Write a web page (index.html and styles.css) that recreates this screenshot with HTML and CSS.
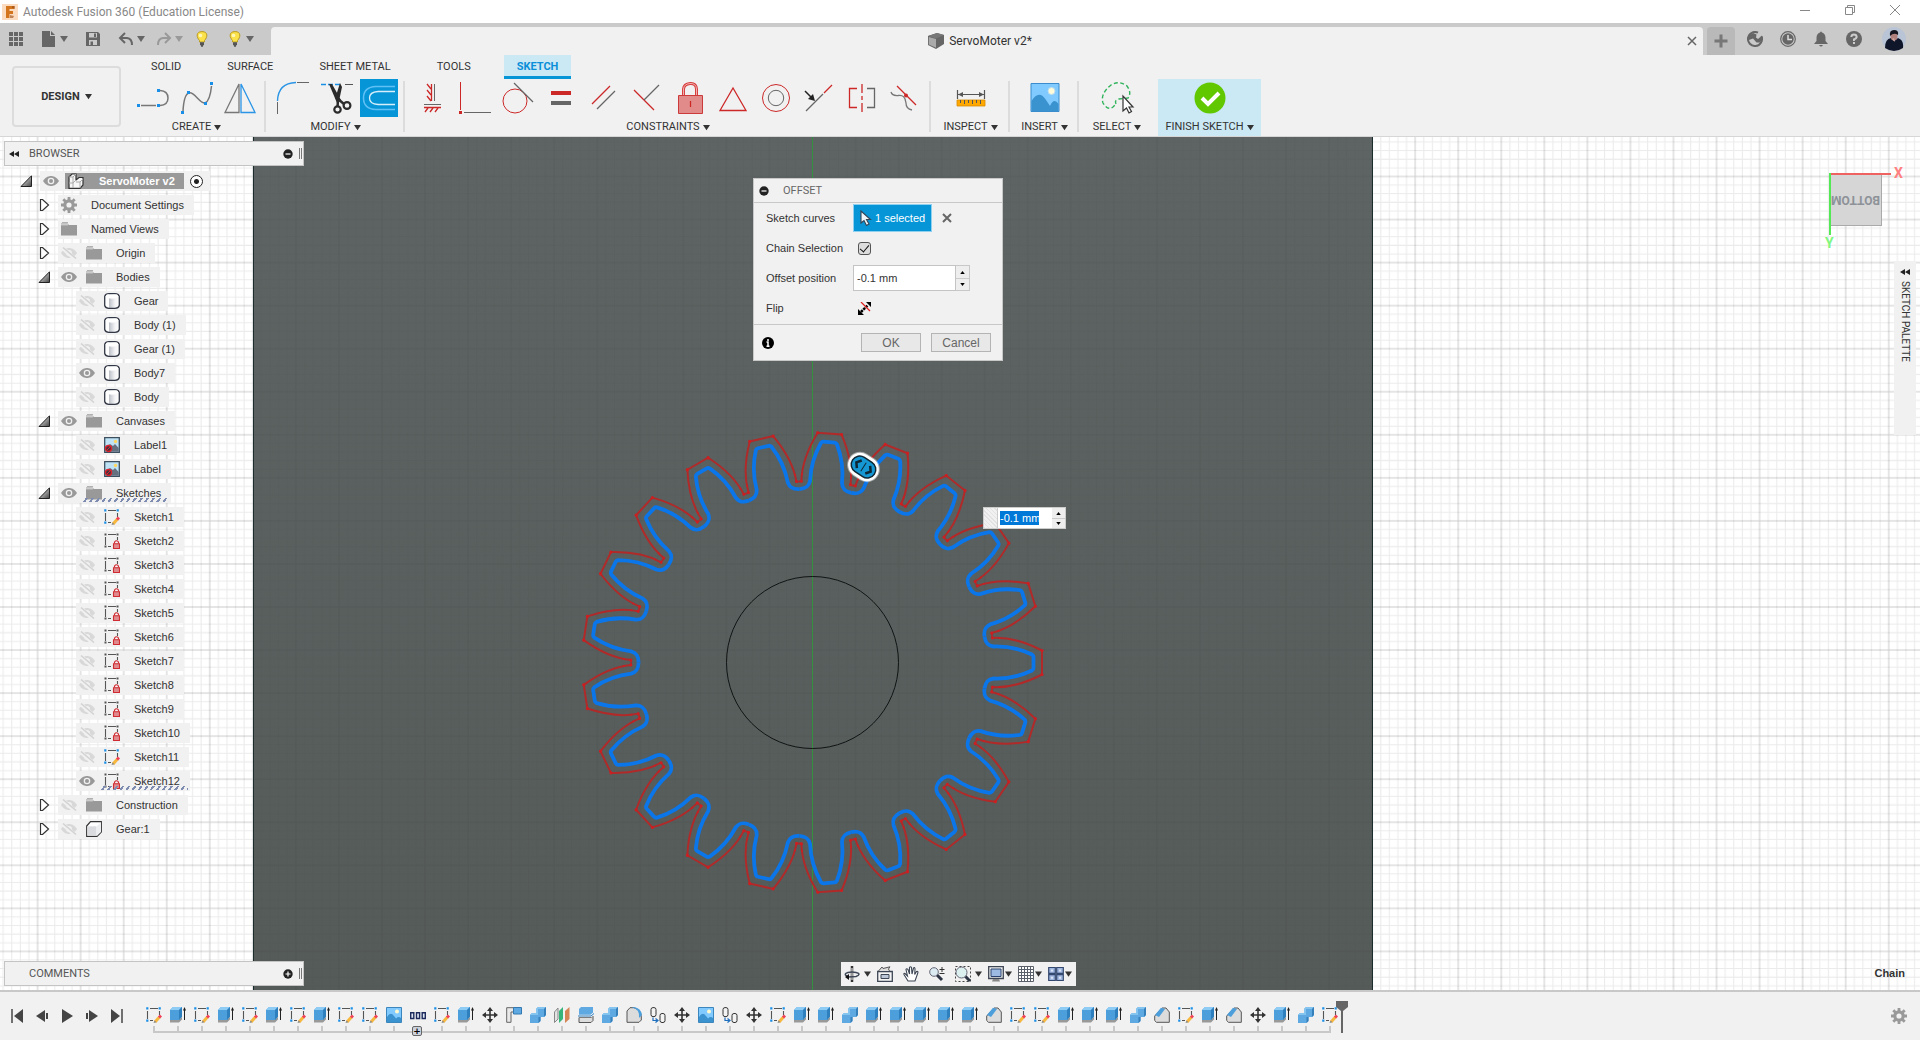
FILE: index.html
```html
<!DOCTYPE html>
<html lang="en">
<head>
<meta charset="utf-8">
<title>Autodesk Fusion 360 (Education License)</title>
<link rel="stylesheet" href="styles.css">
</head>
<body>
<svg class="defs" aria-hidden="true">
  <defs>
    <linearGradient id="g-arrow" x1="0" y1="0" x2="1" y2="1"><stop offset="0" stop-color="#fff"/><stop offset="1" stop-color="#444"/></linearGradient>
    <linearGradient id="g-body" x1="0" x2="1" y1="0" y2="0"><stop offset="0" stop-color="#fff"/><stop offset=".3" stop-color="#fff"/><stop offset=".32" stop-color="#bfc3c9"/><stop offset=".7" stop-color="#f4f4f6"/><stop offset="1" stop-color="#fff"/></linearGradient>
  </defs>
  <symbol id="i-open" viewBox="0 0 12 12"><path d="M1 11.500L11.500 11.500V.8z" fill="url(#g-arrow)" stroke="#222"/></symbol>
  <symbol id="i-closed" viewBox="0 0 12 12"><path d="M2.500 .5H4.500L10.500 6L4.500 11.500H2.500z" fill="#fff" stroke="#333" stroke-width="1.200"/></symbol>
  <symbol id="i-eye" viewBox="0 0 16 16"><path d="M0 8C3 3.500 6 3 8 3s5 .5 8 5c-3 4.500-6 5-8 5s-5-.5-8-5z" fill="#999"/><circle cx="8" cy="8" r="3.300" fill="#f1f1f1"/><circle cx="8" cy="8" r="2" fill="#999"/></symbol>
  <symbol id="i-hid" viewBox="0 0 16 16"><path d="M0 8C3 3.500 6 3 8 3s5 .5 8 5c-3 4.500-6 5-8 5s-5-.5-8-5z" fill="#d8d8d8"/><circle cx="8" cy="8" r="3" fill="#f1f1f1"/><path d="M1 2.500L14 14" stroke="#f1f1f1" stroke-width="4"/><path d="M2 2.500L15 13.500" stroke="#d2d2d2" stroke-width="1.600"/></symbol>
  <symbol id="i-folder" viewBox="0 0 16 16"><path d="M0 2.500h6.500l1.500 1.500h8V14.500H0z" fill="#999"/><path d="M0 3.800h7" stroke="#f1f1f1" stroke-width=".8"/><path d="M1 1.600h6" stroke="#aaa"/></symbol>
  <symbol id="i-gear" viewBox="0 0 16 16"><circle cx="8" cy="8" r="4.200" fill="none" stroke="#999" stroke-width="3.200"/><path d="M8 0V3M8 13V16M0 8H3M13 8H16M2.300 2.300L4.500 4.500M11.500 11.500L13.700 13.700M13.700 2.300L11.500 4.500M4.500 11.500L2.300 13.700" stroke="#999" stroke-width="2.800"/></symbol>
  <symbol id="i-body" viewBox="0 0 16 16"><path d="M.7 3.500Q1.500 .7 5 .7H11Q14.500 .7 15.300 3.500V12.500Q14.500 15.300 11 15.300H5Q1.500 15.300 .7 12.500z" fill="url(#g-body)" stroke="#333846" stroke-width="1.300"/><path d="M1.400 3.500Q8 8 14.600 3.500L13 1.500H3z" fill="#fff"/></symbol>
  <symbol id="i-comp" viewBox="0 0 16 16"><path d="M.7 5L4.500 .7H15.300V11L11 15.300H.7z" fill="#fff" stroke="#333" stroke-width="1.200"/><path d="M1.300 5.300H10.500V14.700H1.300z" fill="#d9dbdf"/><path d="M10.800 5.200L15 1V11L10.800 15z" fill="#eceef0"/></symbol>
  <symbol id="i-asm" viewBox="0 0 16 16"><path d="M1 4L4 1H8V7L11 4.500H15V12L12 15.300H1z" fill="#f6f6f6" stroke="#333" stroke-width="1.200"/><path d="M1 4H5L8 1M5 4V15M1 10H5L8 7M8 9H12L15 6M12 9V15" fill="none" stroke="#aaa"/></symbol>
  <symbol id="i-label" viewBox="0 0 16 16"><path d="M.7 .7H15.300V15.300H.7z" fill="#bfe3f6" stroke="#3d5060" stroke-width="1.300"/><circle cx="11.500" cy="4.500" r="1.700" fill="#ffd75e"/><path d="M1.300 14.700V10L6 7L9 9L11 7L14.700 11V14.700z" fill="#66707f"/><circle cx="4.500" cy="11.500" r="3" fill="#45323c" stroke="#e0202a" stroke-width="1.300"/><path d="M2.500 13.500L6.500 9.500" stroke="#e0202a"/></symbol>
  <symbol id="i-sk" viewBox="0 0 16 16"><path d="M4 1.500H12M1.500 4V12M13.500 4V8M4 13.500H7" stroke="#555" fill="none" stroke-width="1.100"/><path d="M.2 .2h2.200v2.200H.2zM12.600 .2h2.200v2.200h-2.200zM.2 12.600h2.200v2.200H.2z" fill="#1a8fe8"/><path d="M9 15L13.500 10" stroke="#f6b73c" stroke-width="3"/><path d="M13 10.500L15 8.500" stroke="#f04058" stroke-width="3"/><path d="M7.500 16L8.500 13.500L10.500 15.300z" fill="#888"/></symbol>
  <symbol id="i-lk" viewBox="0 0 16 16"><path d="M4 1.500H12M1.500 4V12M13.500 4V7M4 13.500H7" stroke="#555" fill="none" stroke-width="1.100"/><path d="M.5 .5h2v2H.5zM12.500 .5h2v2h-2zM.5 12.500h2v2H.5z" fill="#555"/><path d="M10.500 10.500V9Q12.500 6.500 14.500 9V10.500" fill="none" stroke="#d02c33" stroke-width="1.200"/><path d="M9.500 10.700H15.500V15.500H9.500z" fill="#e08a8d" stroke="#d02c33" stroke-width="1.100"/></symbol>
  <symbol id="i-ext" viewBox="0 0 16 16"><path d="M0 15.500V13H8L12 10V12.500L9 15.500z" fill="#999"/><path d="M0 3L3 0H12V9.500L9 13H0z" fill="#4d9fdc"/><path d="M0 3L3 0H12L9 3z" fill="#8ecbf5"/><path d="M9 3L12 0V9.500L9 13z" fill="#2d7fbd"/><path d="M14.500 1.500V13" stroke="#222"/><path d="M14.500 0L16 3.500H13z" fill="#222"/></symbol>
  <symbol id="i-comb" viewBox="0 0 16 16"><path d="M0 8L2 6H6V2L8 0H16V8L14 10H10.500V14L8.500 16H0z" fill="#5fa9e2"/><path d="M0 8L2 6H6V2L8 0H16L14 2H8V8H6z" fill="#86c4f0"/><path d="M16 0V8L14 10V2zM10.500 10V14L8.500 16V10z" fill="#357fba"/></symbol>
  <symbol id="i-img" viewBox="0 0 16 16"><path d="M.5 .5H15.500V15.500H.5z" fill="#80caff" stroke="#3a86bd"/><circle cx="11" cy="4.500" r="2" fill="#fff9cf"/><path d="M1 15V10Q4.500 4 8 9L10 11.500Q12.500 9 15 11V15z" fill="#3a92cf"/></symbol>
  <symbol id="i-patt" viewBox="0 0 16 16"><path d="M.7 5.700H3.800V11.500H.7zM6.500 5.700H9.600V11.500H6.500zM12.200 5.700H15.300V11.500H12.200z" fill="#dfe6f4" stroke="#1d2c5c" stroke-width="1.400"/></symbol>
  <symbol id="i-move" viewBox="0 0 16 16"><path d="M8 2V14M2 8H14" stroke="#333" stroke-width="1.600"/><path d="M8 0L11 4H5zM8 16L5 12H11zM0 8L4 5V11zM16 8L12 11V5z" fill="#333"/></symbol>
  <symbol id="i-edge" viewBox="0 0 16 16"><path d="M.7 .7H8V5H5V15.300H.7z" fill="#e9e9e9" stroke="#666"/><path d="M7.500 .5H15.500V7H7.500z" fill="#5fa9e2" stroke="#3579b0"/></symbol>
  <symbol id="i-mir" viewBox="0 0 16 16"><path d="M.5 5L4 1V12L.5 15.500z" fill="#e4e4e4" stroke="#888"/><path d="M5 4L9 0V12L5 16z" fill="#35b57a"/><path d="M11 4L15.500 0V12L11 16z" fill="#d58454"/></symbol>
  <symbol id="i-split" viewBox="0 0 16 16"><path d="M1 2L3 0H15V6L13 8H1z" fill="#5fa9e2"/><path d="M1 10.500H13L15 9V13.500L13 15.500H1z" fill="#ddd" stroke="#555"/><path d="M0 9H13L16 6.500" fill="none" stroke="#f1f1f1" stroke-width="2.500"/><path d="M0 9H13L16 6.500" fill="none" stroke="#2f7fc0"/></symbol>
  <symbol id="i-fil" viewBox="0 0 16 16"><path d="M1 4L4 .7H8Q15.300 3 15.300 10V13L13 15.300H1z" fill="#dcdcdc" stroke="#555"/><path d="M6 .5Q14 2 13 11L16 8Q15 1 8 0z" fill="#4d9fdc"/></symbol>
  <symbol id="i-cham" viewBox="0 0 16 16"><path d="M.7 9L8 1H12L15.300 5V15.300H2.500L.7 13.500z" fill="#dcdcdc" stroke="#555"/><path d="M1 8L7 .8L11 2L5 10z" fill="#4d9fdc"/></symbol>
  <symbol id="i-joint" viewBox="0 0 16 16"><rect x="1" y=".6" width="5" height="9" rx="2" fill="#f4f4f4" stroke="#333"/><rect x="10" y="6.500" width="5" height="9" rx="2" fill="#f4f4f4" stroke="#333"/><path d="M3 10.500V13.500H7M5.500 11.500L8 13.500L5.500 15.500" fill="none" stroke="#1e6fc0" stroke-width="1.200"/></symbol>
  <symbol id="i-bulb" viewBox="0 0 16 16"><path d="M8 .6C1.500 .6 2.500 6.500 5.500 9.500V11H10.500V9.500C13.500 6.500 14.500 .6 8 .6z" fill="#fbe14a" stroke="#b99a22"/><circle cx="6.500" cy="4.500" r="1.800" fill="#fff7b8"/><path d="M6 12H10M6 13.500H10M7 15H9" stroke="#555" stroke-width="1.300"/></symbol>
  <symbol id="i-dd" viewBox="0 0 8 8"><path d="M0 1H8L4 7z" fill="currentColor"/></symbol>
</svg>

<header class="titlebar">
  <svg class="ic16" viewBox="0 0 16 16"><path d="M0 0H16V16H0z" fill="#fbdcc0"/><path d="M4 2H12V5H7.500V7H11V10H7.500V14H4z" fill="#d2751c"/><path d="M10 2H13V5L10 4zM8 11L12 12L11 14H8z" fill="#9b4a10" opacity=".6"/></svg>
  <span class="apptitle">Autodesk Fusion 360 (Education License)</span>
  <div class="winbtns">
    <button aria-label="Minimize"><svg viewBox="0 0 12 12"><path d="M1 6.500H11" stroke="#888"/></svg></button>
    <button aria-label="Restore"><svg viewBox="0 0 12 12"><path d="M1.500 3.500H8.500V10.500H1.500zM3.500 3V1.500H10.500V8.500H9" fill="none" stroke="#888"/></svg></button>
    <button aria-label="Close"><svg viewBox="0 0 12 12"><path d="M1 1L11 11M11 1L1 11" stroke="#888"/></svg></button>
  </div>
</header>

<div class="tabbar">
  <div class="quick">
    <button class="plain" aria-label="Data panel"><svg class="ic16" viewBox="0 0 16 16"><path d="M1 1h4v4H1zM6 1h4v4H6zM11 1h4v4h-4zM1 6h4v4H1zM6 6h4v4H6zM11 6h4v4h-4zM1 11h4v4H1zM6 11h4v4H6zM11 11h4v4h-4z" fill="#666"/></svg></button>
    <button aria-label="File"><svg class="ic16" viewBox="0 0 16 16"><path d="M1 0H9V5H14V16H1z" fill="#666"/><path d="M10 0L14 4H10z" fill="#666"/></svg><svg class="dd"><use href="#i-dd"/></svg></button>
    <button class="plain save" aria-label="Save"><svg class="ic16" viewBox="0 0 16 16"><path d="M1 1H13L15 3V15H1z" fill="#666"/><path d="M4 2H12V6.500H4zM4 9H12V14H4z" fill="#cacaca"/><path d="M9 2.500H11V6H9zM5.500 10.500h2.500V14H5.500z" fill="#666"/></svg></button>
    <button aria-label="Undo"><svg class="ic16" viewBox="0 0 16 16"><path d="M7 2L2 7L7 12M3 7H9Q14 7.500 14 14" fill="none" stroke="#666" stroke-width="2"/></svg><svg class="dd"><use href="#i-dd"/></svg></button>
    <button class="dim" aria-label="Redo"><svg class="ic16" viewBox="0 0 16 16"><path d="M9 2L14 7L9 12M13 7H7Q2 7.500 2 14" fill="none" stroke="#999" stroke-width="2"/></svg><svg class="dd"><use href="#i-dd"/></svg></button>
    <button class="plain" aria-label="Tips"><svg class="ic16"><use href="#i-bulb"/></svg></button>
    <button aria-label="Hints"><svg class="ic16"><use href="#i-bulb"/></svg><svg class="dd"><use href="#i-dd"/></svg></button>
  </div>
  <div class="doctab">
    <div class="docname"><svg class="ic16" viewBox="0 0 16 16"><path d="M0 3L9 0L16 2V11L8 16L0 12z" fill="#666"/><path d="M.8 4L8 6V14.800L.8 11.500z" fill="#aaa"/><path d="M0 3L9 0L16 2L8 5.500z" fill="#777"/></svg><span>ServoMoter v2*</span></div>
    <button aria-label="Close tab"><svg class="ic10" viewBox="0 0 10 10"><path d="M1 1L9 9M9 1L1 9" stroke="#666" stroke-width="1.500"/></svg></button>
  </div>
  <div class="account">
    <button class="newtab" aria-label="New tab"><svg viewBox="0 0 14 14"><path d="M7 .5V13.500M.5 7H13.500" stroke="#777" stroke-width="3"/></svg></button>
    <button aria-label="Extensions"><svg class="ic16" viewBox="0 0 16 16"><path d="M11 1.700A7 7 0 1 0 14.500 5.500" fill="none" stroke="#666" stroke-width="2"/><path d="M1.500 5L6 2L9.500 3.500L9 6.500L11 8L15 4.500L16 7L13 11.500L9.500 11.500L6 7.500L2 9z" fill="#666"/></svg></button>
    <button aria-label="Job status"><svg class="ic16" viewBox="0 0 16 16"><circle cx="8" cy="8" r="7.300" fill="none" stroke="#666" stroke-width="1.200"/><circle cx="8" cy="8" r="5.700" fill="#666"/><path d="M8 4V8.500H12" fill="none" stroke="#ddd" stroke-width="1.500"/></svg></button>
    <button aria-label="Notifications"><svg class="ic16" viewBox="0 0 16 16"><path d="M7 1.500Q8-.5 9 1.500Q12.500 2.500 12.500 7V10L15 13H1L3.500 10V7Q3.500 2.500 7 1.500zM6 14H10Q8 17 6 14z" fill="#666"/></svg></button>
    <button aria-label="Help"><svg class="ic16" viewBox="0 0 16 16"><circle cx="8" cy="8" r="8" fill="#666"/><path d="M5.300 6Q5.500 3.500 8 3.500T10.700 6Q10.500 7.500 8 8.500V10M8 11V13" fill="none" stroke="#ccc" stroke-width="2"/></svg></button>
    <button class="avatar" aria-label="Profile"><svg viewBox="0 0 24 24"><circle cx="12" cy="12" r="12" fill="#b9c4d6"/><path d="M3 21Q3 12 9 11L12 14L16 11Q22 13 21 21Q12 27 3 21z" fill="#10162a"/><ellipse cx="12" cy="9" rx="3.500" ry="4.500" fill="#b0807c"/><path d="M8 9Q7 3 12 3T16 8Q12 5 8 9z" fill="#151520"/><path d="M10 12L12 11L13 15z" fill="#d4a8a0"/></svg></button>
  </div>
</div>

<div class="ribbon">
  <button class="design">DESIGN <svg class="dd"><use href="#i-dd"/></svg></button>
  <div class="ribmain">
    <nav class="tabs">
      <a href="#">SOLID</a><a href="#">SURFACE</a><a href="#">SHEET METAL</a><a href="#">TOOLS</a><a href="#" class="on">SKETCH</a>
    </nav>
    <div class="groups">
      <div class="group">
        <div class="tools">
          <button aria-label="Line"><svg viewBox="0 0 38 38"><path d="M6 26.500H21M25 11.500Q33 12 33 19T25 26.500" fill="none" stroke="#777" stroke-width="1.500"/><path d="M2 25h3v3H2zM22 25h3v3h-3zM22 10h3v3h-3z" fill="#1a8fe8"/></svg></button>
          <button aria-label="Spline"><svg viewBox="0 0 38 38"><path d="M5 32Q6 15 11 14C16 12 22 25 27 24Q32 22 33.500 7" fill="none" stroke="#777" stroke-width="1.500"/><path d="M3 32h3v3H3zM9 12h3v3H9zM26 23h3v3h-3zM32 3h3v3h-3z" fill="#1a8fe8"/></svg></button>
          <button aria-label="Mirror"><svg viewBox="0 0 38 38"><path d="M18 5V33.500H4z" fill="none" stroke="#777" stroke-width="1.300"/><path d="M20 5V33.500H34z" fill="none" stroke="#2a95e6" stroke-width="1.300"/></svg></button>
        </div>
        <button class="glabel">CREATE <svg class="dd"><use href="#i-dd"/></svg></button>
      </div>
      <div class="group">
        <div class="tools">
          <button aria-label="Fillet"><svg viewBox="0 0 38 38"><path d="M3.500 35V23M23 3.500H35" stroke="#666"/><path d="M3.500 22Q4 4 22 3.500" fill="none" stroke="#2a95e6" stroke-width="1.300"/></svg></button>
          <button aria-label="Trim"><svg viewBox="0 0 38 38"><path d="M4 5.500H24" stroke="#1a8fe8" stroke-width="1.500" stroke-dasharray="5 2"/><path d="M28 5.500H36" stroke="#555"/><path d="M12 5L15 5L24 21L20 24zM23 4L25 8L22 22L18 20z" fill="#2b2b2b"/><circle cx="20.500" cy="30.500" r="3.200" fill="none" stroke="#2b2b2b" stroke-width="2.200"/><circle cx="30" cy="26.500" r="3.400" fill="none" stroke="#2b2b2b" stroke-width="2.200"/><path d="M21 20L27 25M21 21L20.500 28" stroke="#2b2b2b" stroke-width="2.500"/></svg></button>
          <button class="active" aria-label="Offset"><svg viewBox="0 0 38 38"><path d="M35 7.500H16Q3.500 8 3.500 19T16 30.500H35" fill="none" stroke="#5fc0f5" stroke-width="1.500"/><path d="M35 12.500H18Q9.500 13 9.500 19T18 25.500H35" fill="none" stroke="#d8eefa" stroke-width="1.300"/></svg></button>
        </div>
        <button class="glabel">MODIFY <svg class="dd"><use href="#i-dd"/></svg></button>
      </div>
      <div class="group">
        <div class="tools">
          <button aria-label="Horizontal/Vertical"><svg viewBox="0 0 38 38"><path d="M21.500 5V22M11 25.500H28" stroke="#666"/><path d="M18.500 5V22M11 28.500H28M18 10L14 5M18 16L14 11M18 22L14 17M15 29L12 33M20 29L17 33M25 29L22 33" stroke="#cd2828" stroke-width="1.300"/></svg></button>
          <button aria-label="Coincident"><svg viewBox="0 0 38 38"><path d="M4.500 3V31" stroke="#cd2828"/><path d="M3 32h3v3H3z" fill="#cd2828"/><path d="M8 33.500H35" stroke="#666"/></svg></button>
          <button aria-label="Tangent"><svg viewBox="0 0 38 38"><circle cx="16" cy="22" r="12" fill="none" stroke="#cd2828"/><path d="M15 4L34 23" stroke="#666" stroke-width="1.300"/></svg></button>
          <button aria-label="Equal"><svg viewBox="0 0 38 38"><path d="M9 12h20v4H9z" fill="#cd2828"/><path d="M9 22h20v4H9z" fill="#666"/></svg></button>
          <button aria-label="Parallel"><svg viewBox="0 0 38 38"><path d="M7 25L25 7" stroke="#cd2828" stroke-width="1.300"/><path d="M12 30L30 12" stroke="#666" stroke-width="1.300"/></svg></button>
          <button aria-label="Perpendicular"><svg viewBox="0 0 38 38"><path d="M6 11L26 31" stroke="#cd2828" stroke-width="1.300"/><path d="M16 21L31 6" stroke="#666" stroke-width="1.300"/></svg></button>
          <button aria-label="Fix"><svg viewBox="0 0 38 38"><path d="M12.500 17V10Q13 5 19 4.500T25.500 10V17" fill="none" stroke="#d8403f" stroke-width="3"/><path d="M12.500 17V10Q13 5 19 4.500T25.500 10V17" fill="none" stroke="#f0b0b0"/><path d="M7.500 16.500H31.500V34.500H7.500z" fill="#e28b8b" stroke="#cd3a3a"/><path d="M19.500 22V28" stroke="#cd2828" stroke-width="1.300"/></svg></button>
          <button aria-label="Midpoint"><svg viewBox="0 0 38 38"><path d="M19 9L32 31.500H6z" fill="none" stroke="#cd2828" stroke-width="1.300"/></svg></button>
          <button aria-label="Concentric"><svg viewBox="0 0 38 38"><circle cx="19" cy="19" r="13.500" fill="none" stroke="#cd2828"/><circle cx="19" cy="19" r="7.700" fill="none" stroke="#666"/></svg></button>
          <button aria-label="Collinear"><svg viewBox="0 0 38 38"><path d="M6 32L23 15" stroke="#666" stroke-width="1.300"/><path d="M24 14L32 6" stroke="#cd2828" stroke-width="1.300"/><path d="M5 12L12 19" stroke="#222" stroke-width="1.500"/><path d="M15 22L13 15L8 20z" fill="#222"/></svg></button>
          <button aria-label="Symmetry"><svg viewBox="0 0 38 38"><path d="M14 9.500H6.500V28.500H14" fill="none" stroke="#cd2828" stroke-width="1.300"/><path d="M24 9.500H31.500V28.500H24" fill="none" stroke="#666" stroke-width="1.300"/><path d="M19 5V14M19 17V21M19 24V33" stroke="#cd2828" stroke-width="1.300"/></svg></button>
          <button aria-label="Curvature"><svg viewBox="0 0 38 38"><path d="M11 7L30 26" stroke="#cd2828" stroke-width="1.300"/><path d="M5 13Q6 17 12 16.500Q19 15 20 24Q20 30 26 31" fill="none" stroke="#777" stroke-width="1.300"/><circle cx="20" cy="16.500" r="2" fill="#cd2828"/></svg></button>
        </div>
        <button class="glabel">CONSTRAINTS <svg class="dd"><use href="#i-dd"/></svg></button>
      </div>
      <div class="group wide">
        <div class="tools"><button aria-label="Measure"><svg viewBox="0 0 38 38"><path d="M5.500 11V20M32.500 11V20M6 15.500H32" stroke="#555" stroke-width="1.200"/><path d="M6 15.500L11 13V18zM32 15.500L27 13V18z" fill="#555"/><path d="M5 21H33V27H5z" fill="#ffa800" stroke="#d88a00" stroke-width=".8"/><path d="M8.500 21v3M12.500 21v4M16.500 21v3M20.500 21v4M24.500 21v3M28.500 21v4" stroke="#555"/></svg></button></div>
        <button class="glabel">INSPECT <svg class="dd"><use href="#i-dd"/></svg></button>
      </div>
      <div class="group mid">
        <div class="tools"><button aria-label="Insert image"><svg viewBox="0 0 38 38"><path d="M5 4.500H33V32.500H5z" fill="#80caff" stroke="#3a8ccc"/><circle cx="25.500" cy="12" r="3.500" fill="#fffbd8" stroke="#bcdcf0"/><path d="M5.500 32V22Q13 10 20 21L24 27Q28 18 32.500 25V32z" fill="#3a92cf"/></svg></button></div>
        <button class="glabel">INSERT <svg class="dd"><use href="#i-dd"/></svg></button>
      </div>
      <div class="group last">
        <div class="tools"><button aria-label="Select"><svg viewBox="0 0 38 38"><path d="M18 25Q16 21 21 20L30 19Q34 14 29 7Q21 1 13 6Q2 15 5 24Q10 32 15 28z" fill="none" stroke="#2eb35a" stroke-width="1.400" stroke-dasharray="4 2.500"/><path d="M25 17V32L28.500 29L31 34L33.500 32.500L31 28H35z" fill="#fff" stroke="#333" stroke-width="1.200"/></svg></button></div>
        <button class="glabel">SELECT <svg class="dd"><use href="#i-dd"/></svg></button>
      </div>
      <div class="group finish">
        <div class="tools"><button aria-label="Finish Sketch"><svg viewBox="0 0 38 38"><circle cx="19" cy="19" r="15.500" fill="#61c800"/><path d="M11 19L17 25L28 14" fill="none" stroke="#fff" stroke-width="4"/></svg></button></div>
        <button class="glabel">FINISH SKETCH <svg class="dd"><use href="#i-dd"/></svg></button>
      </div>
    </div>
  </div>
</div>

<main class="viewport">
  <svg class="scene" role="img" aria-label="Gear sketch with offset preview">
    <defs>
      <linearGradient id="shade" x1="0" y1="0" x2="0" y2="1"><stop offset="0" stop-color="#5d6463"/><stop offset="1" stop-color="#555b59"/></linearGradient>
      <pattern id="grid" width="43.050" height="43.050" patternUnits="userSpaceOnUse" patternTransform="translate(812.500 39.500)">
        <path d="M8.600 0V43.050M17.200 0V43.050M25.800 0V43.050M34.400 0V43.050M0 8.600H43.050M0 17.200H43.050M0 25.800H43.050M0 34.400H43.050" stroke="#000" stroke-opacity=".08"/>
        <path d="M0 0V43.050M0 0H43.050M43.050 0V43.050M0 43.050H43.050" stroke="#000" stroke-opacity=".2"/>
      </pattern>
      <path id="red" d="M179.500 -27L179.900 -24.600C195 -25.500 212 -21 229.500 -12V12C212 21 195 25.500 179.900 24.600L179.500 27"/>
      <g id="dots"><circle cx="229.500" cy="-12" r="1.600"/><circle cx="229.500" cy="12" r="1.600"/><circle cx="180" cy="-24.600" r="1.500"/><circle cx="180" cy="24.600" r="1.500"/><circle cx="187" cy="-24.600" r="1"/><circle cx="187" cy="24.600" r="1"/></g>
      <path id="blue" d="M172 -25.900C173 -20 175 -16.800 181 -16C196 -16.500 209 -13 219.500 -8Q221 -7 221 -5.500V5.500Q221 7 219.500 8C209 13 196 16.500 181 16C175 16.800 173 20 172 25.900"/>
      <g id="tooth"><use href="#red" fill="none" stroke="#b02a2a" stroke-width="2"/><use href="#dots" fill="#cc1f22"/><use href="#blue" fill="none" stroke="#0b76ea" stroke-width="3.800"/></g>
      <g id="t3"><use href="#tooth"/><use href="#tooth" transform="rotate(17.143)"/><use href="#tooth" transform="rotate(34.286)"/></g>
    </defs>
    <rect width="100%" height="100%" fill="#fff"/>
    <rect width="100%" height="100%" fill="url(#grid)"/>
    <rect x="253" width="1120" height="100%" fill="url(#shade)"/>
    <rect x="253" width="1120" height="100%" fill="url(#grid)" opacity=".28"/>
    <path d="M253.500 0V2000M1372.500 0V2000" stroke="#1c2d2e"/>
    <path d="M812.500 0V2000" stroke="#35913f"/>
    <g transform="translate(812.500 525.500)">
      <circle r="86" fill="none" stroke="#101414"/>
      <use href="#t3"/><use href="#t3" transform="rotate(51.429)"/><use href="#t3" transform="rotate(102.857)"/><use href="#t3" transform="rotate(154.286)"/><use href="#t3" transform="rotate(205.714)"/><use href="#t3" transform="rotate(257.143)"/><use href="#t3" transform="rotate(308.571)"/>
    </g>
    <g transform="translate(863.500 330) rotate(33)">
      <rect x="-17" y="-13" width="34" height="26" rx="13" fill="#fff" opacity=".45"/>
      <rect x="-16" y="-12" width="32" height="24" rx="12" fill="#fff"/>
      <rect x="-13" y="-8.500" width="26" height="17" rx="8.500" fill="#1597d4" stroke="#0f2733" stroke-width="1.500"/>
      <path d="M0 -5V5" stroke="#0f2733"/><path d="M-5 -4.500L-8.500 0L-5 4.500M5 -4.500L8.500 0L5 4.500" fill="none" stroke="#0f2733" stroke-width="2.500"/>
    </g>
  </svg>

  <aside class="browser">
    <div class="panelhead">
      <button aria-label="Collapse"><svg class="ic10" viewBox="0 0 10 10"><path d="M5 2V8L0 5zM10 2V8L5 5z" fill="#222"/></svg></button>
      <span>BROWSER</span>
      <button aria-label="Hide browser"><svg class="ic10" viewBox="0 0 10 10"><circle cx="5" cy="5" r="4.700" fill="#222"/><path d="M2.500 5H7.500" stroke="#fff" stroke-width="1.200"/></svg></button><i class="grip"></i>
    </div>
    <ul class="tree">
      <li class="l0"><svg class="ar"><use href="#i-open"/></svg><div class="chip root"><svg class="ic16"><use href="#i-eye"/></svg><b><svg class="ic16"><use href="#i-asm"/></svg>ServoMoter v2</b><input type="radio" checked aria-label="Activate ServoMoter v2"></div></li>
      <li class="l1"><svg class="ar"><use href="#i-closed"/></svg><div class="chip"><svg class="ic16"><use href="#i-gear"/></svg><span>Document Settings</span></div></li>
      <li class="l1"><svg class="ar"><use href="#i-closed"/></svg><div class="chip"><svg class="ic16"><use href="#i-folder"/></svg><span>Named Views</span></div></li>
      <li class="l1"><svg class="ar"><use href="#i-closed"/></svg><div class="chip"><svg class="ic16"><use href="#i-hid"/></svg><svg class="ic16"><use href="#i-folder"/></svg><span>Origin</span></div></li>
      <li class="l1"><svg class="ar"><use href="#i-open"/></svg><div class="chip"><svg class="ic16"><use href="#i-eye"/></svg><svg class="ic16"><use href="#i-folder"/></svg><span>Bodies</span></div></li>
      <li class="l2"><div class="chip"><svg class="ic16"><use href="#i-hid"/></svg><svg class="ic16"><use href="#i-body"/></svg><span>Gear</span></div></li>
      <li class="l2"><div class="chip"><svg class="ic16"><use href="#i-hid"/></svg><svg class="ic16"><use href="#i-body"/></svg><span>Body (1)</span></div></li>
      <li class="l2"><div class="chip"><svg class="ic16"><use href="#i-hid"/></svg><svg class="ic16"><use href="#i-body"/></svg><span>Gear (1)</span></div></li>
      <li class="l2"><div class="chip"><svg class="ic16"><use href="#i-eye"/></svg><svg class="ic16"><use href="#i-body"/></svg><span>Body7</span></div></li>
      <li class="l2"><div class="chip"><svg class="ic16"><use href="#i-hid"/></svg><svg class="ic16"><use href="#i-body"/></svg><span>Body</span></div></li>
      <li class="l1"><svg class="ar"><use href="#i-open"/></svg><div class="chip"><svg class="ic16"><use href="#i-eye"/></svg><svg class="ic16"><use href="#i-folder"/></svg><span>Canvases</span></div></li>
      <li class="l2"><div class="chip"><svg class="ic16"><use href="#i-hid"/></svg><svg class="ic16"><use href="#i-label"/></svg><span>Label1</span></div></li>
      <li class="l2"><div class="chip"><svg class="ic16"><use href="#i-hid"/></svg><svg class="ic16"><use href="#i-label"/></svg><span>Label</span></div></li>
      <li class="l1"><svg class="ar"><use href="#i-open"/></svg><div class="chip hatch"><svg class="ic16"><use href="#i-eye"/></svg><svg class="ic16"><use href="#i-folder"/></svg><span>Sketches</span></div></li>
      <li class="l2"><div class="chip"><svg class="ic16"><use href="#i-hid"/></svg><svg class="ic16"><use href="#i-sk"/></svg><span>Sketch1</span></div></li>
      <li class="l2"><div class="chip"><svg class="ic16"><use href="#i-hid"/></svg><svg class="ic16"><use href="#i-lk"/></svg><span>Sketch2</span></div></li>
      <li class="l2"><div class="chip"><svg class="ic16"><use href="#i-hid"/></svg><svg class="ic16"><use href="#i-lk"/></svg><span>Sketch3</span></div></li>
      <li class="l2"><div class="chip"><svg class="ic16"><use href="#i-hid"/></svg><svg class="ic16"><use href="#i-lk"/></svg><span>Sketch4</span></div></li>
      <li class="l2"><div class="chip"><svg class="ic16"><use href="#i-hid"/></svg><svg class="ic16"><use href="#i-lk"/></svg><span>Sketch5</span></div></li>
      <li class="l2"><div class="chip"><svg class="ic16"><use href="#i-hid"/></svg><svg class="ic16"><use href="#i-lk"/></svg><span>Sketch6</span></div></li>
      <li class="l2"><div class="chip"><svg class="ic16"><use href="#i-hid"/></svg><svg class="ic16"><use href="#i-lk"/></svg><span>Sketch7</span></div></li>
      <li class="l2"><div class="chip"><svg class="ic16"><use href="#i-hid"/></svg><svg class="ic16"><use href="#i-lk"/></svg><span>Sketch8</span></div></li>
      <li class="l2"><div class="chip"><svg class="ic16"><use href="#i-hid"/></svg><svg class="ic16"><use href="#i-lk"/></svg><span>Sketch9</span></div></li>
      <li class="l2"><div class="chip"><svg class="ic16"><use href="#i-hid"/></svg><svg class="ic16"><use href="#i-lk"/></svg><span>Sketch10</span></div></li>
      <li class="l2"><div class="chip"><svg class="ic16"><use href="#i-hid"/></svg><svg class="ic16"><use href="#i-sk"/></svg><span>Sketch11</span></div></li>
      <li class="l2"><div class="chip hatch"><svg class="ic16"><use href="#i-eye"/></svg><svg class="ic16"><use href="#i-lk"/></svg><span>Sketch12</span></div></li>
      <li class="l1"><svg class="ar"><use href="#i-closed"/></svg><div class="chip"><svg class="ic16"><use href="#i-hid"/></svg><svg class="ic16"><use href="#i-folder"/></svg><span>Construction</span></div></li>
      <li class="l1"><svg class="ar"><use href="#i-closed"/></svg><div class="chip"><svg class="ic16"><use href="#i-hid"/></svg><svg class="ic16"><use href="#i-comp"/></svg><span>Gear:1</span></div></li>
    </ul>
  </aside>

  <div class="comments panelhead">
    <span>COMMENTS</span>
    <button aria-label="Show comments"><svg class="ic10" viewBox="0 0 10 10"><circle cx="5" cy="5" r="4.700" fill="#222"/><path d="M2.500 5H7.500M5 2.500V7.500" stroke="#fff" stroke-width="1.200"/></svg></button><i class="grip"></i>
  </div>

  <form class="dialog">
    <div class="dhead"><svg class="ic10" viewBox="0 0 10 10"><circle cx="5" cy="5" r="4.700" fill="#222"/><path d="M2.500 5H7.500" stroke="#fff" stroke-width="1.200"/></svg><span>OFFSET</span></div>
    <div class="dbody">
      <span>Sketch curves</span>
      <div class="drow"><button type="button" class="sel"><svg viewBox="0 0 12 16"><path d="M1 1V13L4 10.500L6.500 15.500L9 14L6.500 9.500H10.500z" fill="#eef6fa" stroke="#345" stroke-width="1.100"/></svg>1 selected</button><button type="button" class="clear" aria-label="Clear selection"><svg class="ic10" viewBox="0 0 10 10"><path d="M1 1L9 9M9 1L1 9" stroke="#666" stroke-width="2"/></svg></button></div>
      <label for="chain">Chain Selection</label>
      <div class="drow"><input id="chain" type="checkbox" checked></div>
      <label for="pos">Offset position</label>
      <div class="drow"><input id="pos" type="text" value="-0.1 mm"><div class="spin"><button type="button" aria-label="Increase"><svg viewBox="0 0 6 4"><path d="M3 0L6 4H0z"/></svg></button><button type="button" aria-label="Decrease"><svg viewBox="0 0 6 4"><path d="M3 4L6 0H0z"/></svg></button></div></div>
      <span>Flip</span>
      <div class="drow"><button type="button" class="flip" aria-label="Flip"><svg viewBox="0 0 13 13"><path d="M3 10L10 3" stroke="#000" stroke-width="2.500" stroke-dasharray="2.500 .8"/><path d="M13 0V5L8 0zM0 13V7L6 13z" fill="#000"/><path d="M3 0L12 9" stroke="#e02020" stroke-width="1.200"/></svg></button></div>
    </div>
    <div class="dfoot">
      <svg class="info" viewBox="0 0 12 12"><circle cx="6" cy="6" r="6" fill="#000"/><path d="M6 2V4M4.500 5H6V9M4.500 9.300H7.500" stroke="#fff" stroke-width="1.500" fill="none"/></svg>
      <button type="button">OK</button><button type="button">Cancel</button>
    </div>
  </form>

  <div class="mini"><i></i><input type="text" value="-0.1 mm" aria-label="Offset value"><div class="spin"><button aria-label="Increase"><svg viewBox="0 0 6 4"><path d="M3 0L6 4H0z"/></svg></button><button aria-label="Decrease"><svg viewBox="0 0 6 4"><path d="M3 4L6 0H0z"/></svg></button></div></div>

  <div class="cube">
    <span class="face">BOTTOM</span><span class="ax x">X</span><span class="ax y">Y</span>
  </div>

  <button class="palette"><svg class="ic10" viewBox="0 0 10 10"><path d="M5 2V8L0 5zM10 2V8L5 5z" fill="#222"/></svg><span>SKETCH PALETTE</span></button>
  <span class="hint">Chain</span>

  <div class="navbar">
    <button aria-label="Orbit"><svg class="ic16" viewBox="0 0 16 16"><path d="M8 0V16" stroke="#333" stroke-width="2.500"/><path d="M8 2V14" stroke="#fff"/><path d="M3 10Q-1 8 4 6.500Q8 5.500 12 6.500Q18 8 12 10.500L4 11" fill="none" stroke="#3d4654" stroke-width="1.500"/><path d="M1 11L5 8V14z" fill="#111"/></svg><svg class="dd"><use href="#i-dd"/></svg></button>
    <button aria-label="Look at"><svg class="ic16" viewBox="0 0 16 16"><path d="M.7 5.500H15.300V15.300H.7z" fill="#f4f4f4" stroke="#3d4654" stroke-width="1.300"/><path d="M4 8.500H12V12.500H4z" fill="#bcc6d6" stroke="#3d4654"/><path d="M1.500 5L5 1L6 2.500L13 .8L11.500 3L12.500 5" fill="#ddd" stroke="#555"/></svg></button>
    <button aria-label="Pan"><svg class="ic16" viewBox="0 0 16 16"><path d="M5 15L1 8.500Q.5 7 2 7.500L4.500 10L3 3.500Q3.500 2 5 3.500L6.500 8L6.500 1.500Q7.500 0 8.500 1.500L9 8L10.500 2Q12 1 12 3L11.700 8.500L13.500 5.500Q15.500 5 14.800 7L12 15z" fill="#fff" stroke="#3d4654" stroke-width="1.100"/></svg></button>
    <button aria-label="Zoom"><svg class="ic16" viewBox="0 0 16 16"><path d="M8 9L13 14" stroke="#2d3544" stroke-width="3"/><circle cx="5" cy="6" r="4.300" fill="#dcecf2" stroke="#667"/><path d="M10.500 3.500H15.500M13 1V6M10.500 7.500H15.500" stroke="#333"/></svg></button>
    <button aria-label="Fit"><svg class="ic16" viewBox="0 0 16 16"><path d="M.5 .5H15.500V15.500H.5z" fill="none" stroke="#444" stroke-dasharray="2 2"/><path d="M10 10L15 15" stroke="#2d3544" stroke-width="3"/><circle cx="6.500" cy="6.500" r="5.500" fill="#dcf0f0" stroke="#667"/></svg><svg class="dd"><use href="#i-dd"/></svg></button>
    <button aria-label="Display settings"><svg class="ic16" viewBox="0 0 16 16"><path d="M.7 .7H15.300V12.500H.7z" fill="#eee" stroke="#3d4654" stroke-width="1.300"/><path d="M3 3H13V10.500H3z" fill="#9dbbe2" stroke="#2c4570"/><path d="M5 13H11L12 15.500H4z" fill="#888"/></svg><svg class="dd"><use href="#i-dd"/></svg></button>
    <button aria-label="Grid settings"><svg class="ic16" viewBox="0 0 16 16"><path d="M.5 .5H15.500V15.500H.5zM3.500 0V16M6.500 0V16M9.500 0V16M12.500 0V16M0 3.500H16M0 6.500H16M0 9.500H16M0 12.500H16" fill="#fff" stroke="#596069"/></svg><svg class="dd"><use href="#i-dd"/></svg></button>
    <button aria-label="Viewports"><svg class="ic16" viewBox="0 0 16 16"><path d="M.7 1.500H7.300V7.300H.7zM8.700 1.500H15.300V7.300H8.700zM.7 8.700H7.300V14.500H.7zM8.700 8.700H15.300V14.500H8.700z" fill="#9fb6de" stroke="#34496f" stroke-width="1.200"/><path d="M3 3.500h2v2H3zM11 3.500h2v2h-2zM3 10.700h2v2H3zM11 10.700h2v2h-2z" fill="#dbe5f5"/></svg><svg class="dd"><use href="#i-dd"/></svg></button>
  </div>
</main>

<footer class="timeline">
  <div class="play">
    <button aria-label="To start"><svg viewBox="0 0 14 14"><path d="M2 0V14" stroke="#444" stroke-width="1.500"/><path d="M13 0V14L4 7z" fill="#444"/></svg></button>
    <button aria-label="Step back"><svg viewBox="0 0 14 14"><path d="M10 1V13L1 7z" fill="#444"/><path d="M12 4V10" stroke="#444" stroke-width="2"/></svg></button>
    <button aria-label="Play"><svg viewBox="0 0 14 14"><path d="M2 0V14L13 7z" fill="#444"/></svg></button>
    <button aria-label="Step forward"><svg viewBox="0 0 14 14"><path d="M4 1V13L13 7z" fill="#444"/><path d="M2 4V10" stroke="#444" stroke-width="2"/></svg></button>
    <button aria-label="To end"><svg viewBox="0 0 14 14"><path d="M1 0V14L10 7z" fill="#444"/><path d="M12 0V14" stroke="#444" stroke-width="1.500"/></svg></button>
  </div>
  <div class="track">
    <ol>
      <li><svg><use href="#i-sk"/></svg></li><li><svg><use href="#i-ext"/></svg></li><li><svg><use href="#i-sk"/></svg></li><li><svg><use href="#i-ext"/></svg></li><li><svg><use href="#i-sk"/></svg></li>
      <li><svg><use href="#i-ext"/></svg></li><li><svg><use href="#i-sk"/></svg></li><li><svg><use href="#i-ext"/></svg></li><li><svg><use href="#i-sk"/></svg></li><li><svg><use href="#i-sk"/></svg></li>
      <li><svg><use href="#i-img"/></svg></li><li><svg><use href="#i-patt"/></svg><button class="plus" aria-label="Expand group">+</button></li><li><svg><use href="#i-sk"/></svg></li><li><svg><use href="#i-ext"/></svg></li><li><svg><use href="#i-move"/></svg></li>
      <li><svg><use href="#i-edge"/></svg></li><li><svg><use href="#i-comb"/></svg></li><li><svg><use href="#i-mir"/></svg></li><li><svg><use href="#i-split"/></svg></li><li><svg><use href="#i-comb"/></svg></li>
      <li><svg><use href="#i-fil"/></svg></li><li><svg><use href="#i-joint"/></svg></li><li><svg><use href="#i-move"/></svg></li><li><svg><use href="#i-img"/></svg></li><li><svg><use href="#i-joint"/></svg></li>
      <li><svg><use href="#i-move"/></svg></li><li><svg><use href="#i-sk"/></svg></li><li><svg><use href="#i-ext"/></svg></li><li><svg><use href="#i-ext"/></svg></li><li><svg><use href="#i-comb"/></svg></li>
      <li><svg><use href="#i-ext"/></svg></li><li><svg><use href="#i-ext"/></svg></li><li><svg><use href="#i-ext"/></svg></li><li><svg><use href="#i-ext"/></svg></li><li><svg><use href="#i-ext"/></svg></li>
      <li><svg><use href="#i-cham"/></svg></li><li><svg><use href="#i-sk"/></svg></li><li><svg><use href="#i-sk"/></svg></li><li><svg><use href="#i-ext"/></svg></li><li><svg><use href="#i-ext"/></svg></li>
      <li><svg><use href="#i-ext"/></svg></li><li><svg><use href="#i-comb"/></svg></li><li><svg><use href="#i-cham"/></svg></li><li><svg><use href="#i-sk"/></svg></li><li><svg><use href="#i-ext"/></svg></li>
      <li><svg><use href="#i-cham"/></svg></li><li><svg><use href="#i-move"/></svg></li><li><svg><use href="#i-ext"/></svg></li><li><svg><use href="#i-comb"/></svg></li><li><svg><use href="#i-sk"/></svg></li>
    </ol>
    <div class="rail"></div>
    <svg class="marker" viewBox="0 0 12 32"><path d="M0 0H12V6L7 10V32H5V10L0 6z" fill="#666"/></svg>
  </div>
  <button class="prefs" aria-label="Timeline settings"><svg class="ic16"><use href="#i-gear"/></svg></button>
</footer>
</body>
</html>
```

FILE: styles.css
```css
* { box-sizing: border-box; }
body {
  margin: 0;
  height: 100vh;
  display: flex;
  flex-direction: column;
  background: #f1f1f1;
  color: #333;
  font: 11px/16px "Liberation Sans", Arial, sans-serif;
  overflow: hidden;
}
button {
  margin: 0;
  padding: 0;
  border: 0;
  background: none;
  color: inherit;
  font: inherit;
}
svg { display: block; flex: none; }
.defs { position: absolute; width: 0; height: 0; }
.ic16 { width: 16px; height: 16px; }
.ic10 { width: 10px; height: 10px; }
.dd { width: 8px; height: 8px; }

/* window title */
.titlebar {
  display: flex;
  align-items: center;
  flex: none;
  height: 23px;
  padding: 0 3px 0 2px;
  background: #fff;
}
.apptitle { margin-left: 5px; color: #888; font: 12px/16px Roboto, sans-serif; }
.winbtns { display: flex; margin-left: auto; padding-bottom: 3px; }
.winbtns button { width: 45px; display: flex; justify-content: center; }
.winbtns svg { width: 12px; height: 12px; }

/* document tabs */
.tabbar { display: flex; flex: none; height: 32px; background: #cacaca; }
.quick { display: flex; align-items: center; gap: 11px; width: 271px; flex: none; padding-left: 8px; color: #666; }
.quick button { display: flex; align-items: center; gap: 3px; }
.quick .plain { padding-right: 6px; }
.quick .save { margin-left: 6px; }
.quick .dim { color: #999; }
.doctab {
  flex: 1;
  display: flex;
  align-items: center;
  margin-top: 4px;
  padding: 0 6px 0 2px;
  border-radius: 4px 4px 0 0;
  background: #f1f1f1;
  font: 12px/16px Roboto, sans-serif;
}
.docname { flex: 1; display: flex; justify-content: center; gap: 5px; }
.account { display: flex; align-items: center; width: 217px; flex: none; padding-left: 4px; }
.account button { width: 33px; display: flex; justify-content: center; }
.account .newtab { width: 28px; height: 28px; margin: 4px 3px 0 0; align-items: center; background: #b9b9b9; border-radius: 4px 4px 0 0; }
.newtab svg { width: 14px; height: 14px; }
.account .avatar { width: 24px; margin-left: 12px; }
.avatar svg { width: 24px; height: 24px; }

/* ribbon */
.ribbon {
  display: flex;
  flex: none;
  padding-left: 12px;
  border-bottom: 1px solid #d6d6d6;
  font-family: Roboto, sans-serif;
}
.ribbon .dd { width: 7px; height: 7px; }
.design {
  display: flex;
  align-items: center;
  justify-content: center;
  gap: 5px;
  width: 109px;
  height: 61px;
  margin-top: 11px;
  border: 2px solid #dcdcdc;
  border-radius: 4px;
  font-weight: 700;
}
.ribmain { flex: 1; padding-left: 6px; }
.tabs { display: flex; gap: 20px; padding-left: 11px; }
.tabs a {
  padding: 4px 13px 1px;
  border-bottom: 3px solid transparent;
  color: #333;
  text-decoration: none;
}
.tabs .on { color: #0a8fd8; background: #cbe9f5; border-color: #0696d7; font-weight: 700; }
.groups { display: flex; align-items: stretch; }
.group { position: relative; display: flex; flex-direction: column; align-items: center; padding: 0 5px; height: 57px; }
.group::after { content: ""; position: absolute; right: 0; top: 2px; bottom: 4px; width: 2px; background: #dcdcdc; }
.tools { display: flex; }
.tools button { width: 43px; height: 38px; display: flex; justify-content: center; }
.tools svg { width: 38px; height: 38px; }
.tools .active svg { background: #0696d7; }
.glabel { display: flex; align-items: center; gap: 3px; margin-top: 2px; }
.wide { width: 79px; }
.mid { width: 69px; }
.last { width: 76px; }
.last::after, .finish::after { display: none; }
.finish { width: 103px; background: #cbe9f5; margin-left: 3px; }

/* canvas area */
.viewport { position: relative; flex: 1; min-height: 0; overflow: hidden; }
.scene { position: absolute; inset: 0; width: 100%; height: 100%; }
.browser { position: absolute; left: 4px; top: 4px; width: 300px; }
.panelhead {
  display: flex;
  align-items: center;
  height: 25px;
  padding: 0 1px 0 4px;
  background: #f1f1f1;
  border: 1px solid #c4c4c4;
  color: #555;
  font-family: Roboto, sans-serif;
}
.panelhead span { flex: 1; padding-left: 10px; }
.grip { width: 3px; height: 11px; margin-left: 6px; border: solid #777; border-width: 0 1px; }
.comments { position: absolute; left: 4px; bottom: 4px; width: 300px; padding-left: 14px; }
.tree { list-style: none; margin: 3px 0 0; padding: 0; }
.tree li { display: flex; align-items: center; gap: 8px; height: 24px; }
.tree .l0 { padding-left: 16px; }
.tree .l1 { padding-left: 34px; }
.tree .l2 { padding-left: 72px; }
.ar { width: 12px; height: 12px; }
.chip { position: relative; display: flex; align-items: center; gap: 9px; height: 20px; padding: 0 10px 0 3px; background: #f1f1f1; }
.chip span { padding-left: 5px; }
.root { gap: 6px; padding-right: 7px; }
.root b { display: flex; align-items: center; gap: 15px; height: 16px; padding: 0 9px 0 3px; background: #999; color: #fff; }
.root input {
  appearance: none;
  width: 13px;
  height: 13px;
  margin: 0;
  border: 1px solid #222;
  border-radius: 50%;
  background: radial-gradient(circle, #222 0 2px, #fff 3px);
}
.hatch::after {
  content: "";
  position: absolute;
  left: 24px;
  right: 2px;
  bottom: 1px;
  height: 4px;
  background: repeating-linear-gradient(125deg, transparent 0 3px, #7d8cb0 3px 5px);
}

/* offset dialog */
.dialog { position: absolute; left: 753px; top: 41px; width: 250px; background: #f1f1f1; border: 1px solid #c8c8c8; }
.dhead { display: flex; align-items: center; gap: 14px; height: 24px; padding-left: 5px; border-bottom: 1px solid #c8c8c8; color: #666; font-family: Roboto, sans-serif; }
.dbody { display: grid; grid-template-columns: 87px 1fr; grid-auto-rows: 30px; align-items: center; padding: 0 0 1px 12px; }
.drow { display: flex; align-items: center; }
.sel { display: flex; align-items: center; gap: 3px; width: 79px; height: 28px; padding-left: 6px; background: #0696d7; border: 1px solid #8fd0f0; color: #fff; }
.sel svg { width: 12px; height: 16px; }
.clear { margin-left: 10px; }
.dialog input[type="checkbox"] {
  appearance: none;
  width: 13px;
  height: 13px;
  margin: 0 5px;
  border: 1px solid #555;
  border-radius: 3px;
  background: #ddd;
  display: grid;
  place-items: center;
}
.dialog input[type="checkbox"]::before { content: ""; width: 4px; height: 8px; margin-bottom: 2px; border: solid #111; border-width: 0 1px 1px 0; transform: rotate(40deg); }
.dialog input[type="text"] { width: 103px; height: 26px; padding: 0 3px; border: 1px solid #c4c4c4; color: #333; font: inherit; }
.spin { display: flex; flex-direction: column; width: 14px; border: 1px solid #c8c8c8; border-left: 0; background: #eee; }
.spin button { height: 12px; display: flex; align-items: center; justify-content: center; }
.spin button + button { border-top: 1px solid #ccc; }
.spin svg { width: 5px; height: 3px; }
.flip { margin-left: 5px; }
.flip svg { width: 13px; height: 13px; }
.dfoot { display: flex; align-items: center; gap: 10px; height: 36px; padding: 0 11px 0 8px; border-top: 1px solid #c8c8c8; }
.info { width: 12px; height: 12px; margin-right: auto; }
.dfoot button { width: 60px; height: 19px; border: 1px solid #b4b4b4; background: #e8e8e8; color: #666; font-size: 12px; }

/* in-canvas value box */
.mini { position: absolute; left: 983px; top: 370px; display: flex; width: 83px; height: 22px; background: #f1f1f1; border: 1px solid #ccc; }
.mini i { width: 14px; border-right: 1px solid #ccc; background: repeating-linear-gradient(45deg, #e2e2e2 0 1px, #f1f1f1 1px 3px); }
.mini input { width: 54px; height: 20px; padding: 3px 2px; border: 0; background: linear-gradient(#0078d7, #0078d7) 2px 3px / 39px 14px no-repeat #fff; color: #fff; font: inherit; }
.mini .spin { border: 0; width: 13px; }
.mini .spin button { height: 10px; }

/* view cube */
.cube { position: absolute; right: 38px; top: 36px; width: 53px; height: 54px; }
.face { position: absolute; left: 0; top: 1px; width: 53px; height: 52px; background: #d6d6d6; border: 1px solid #aaa; color: #8d9298; font: 700 12px/50px Roboto, sans-serif; text-align: center; transform: rotate(180deg); }
.cube::before { content: ""; position: absolute; z-index: 1; left: 0; top: 0; width: 62px; height: 2px; background: #ee6262; }
.cube::after { content: ""; position: absolute; z-index: 1; left: 0; top: 0; width: 2px; height: 62px; background: #55e855; }
.ax { position: absolute; font: 700 14px/16px Roboto, sans-serif; }
.x { left: 65px; top: -8px; color: #ff8080; }
.y { left: -4px; top: 62px; color: #80f880; }
.palette { position: absolute; right: 4px; top: 124px; width: 22px; height: 174px; display: flex; flex-direction: column; align-items: center; gap: 4px; padding-top: 6px; background: #f1f1f1; font: 10px/16px Roboto, sans-serif; }
.palette span { writing-mode: vertical-rl; }
.hint { position: absolute; right: 15px; bottom: 9px; font-weight: 700; }

.navbar { position: absolute; left: 841px; bottom: 4px; display: flex; align-items: center; gap: 10px; height: 24px; padding: 0 4px 0 3px; background: #f1f1f1; }
.navbar button { display: flex; align-items: center; gap: 4px; }
.navbar button:nth-child(2) { margin-left: -4px; }
.navbar button:nth-child(n+6) { margin-left: -4px; gap: 1px; }
.navbar .dd { width: 7px; }

/* timeline */
.timeline { display: flex; flex: none; height: 50px; border-top: 2px solid #c8c8c8; }
.play { display: flex; height: 48px; padding: 0 13px 1px 4px; }
.play button { width: 25px; display: flex; align-items: center; justify-content: center; }
.play svg { width: 14px; height: 14px; }
.track { position: relative; padding-top: 15px; }
.track ol { display: flex; list-style: none; margin: 0; padding: 0; }
.track li { position: relative; width: 24px; display: flex; flex-direction: column; align-items: center; gap: 3px; }
.track li > svg { width: 16px; height: 16px; }
.track li::after { content: ""; width: 2px; height: 5px; background: #c8c8c8; }
.rail { height: 2px; margin: 0 11px; background: #c8c8c8; }
.plus { position: absolute; z-index: 1; left: 6px; top: 19px; width: 10px; height: 10px; border: 1px solid #666; border-radius: 2px; background: #ccd2dc; font: 700 9px/8px "DejaVu Sans", sans-serif; color: #000; }
.marker { position: absolute; right: -6px; top: 9px; width: 12px; height: 32px; }
.prefs { margin: 0 13px 0 auto; }
```
